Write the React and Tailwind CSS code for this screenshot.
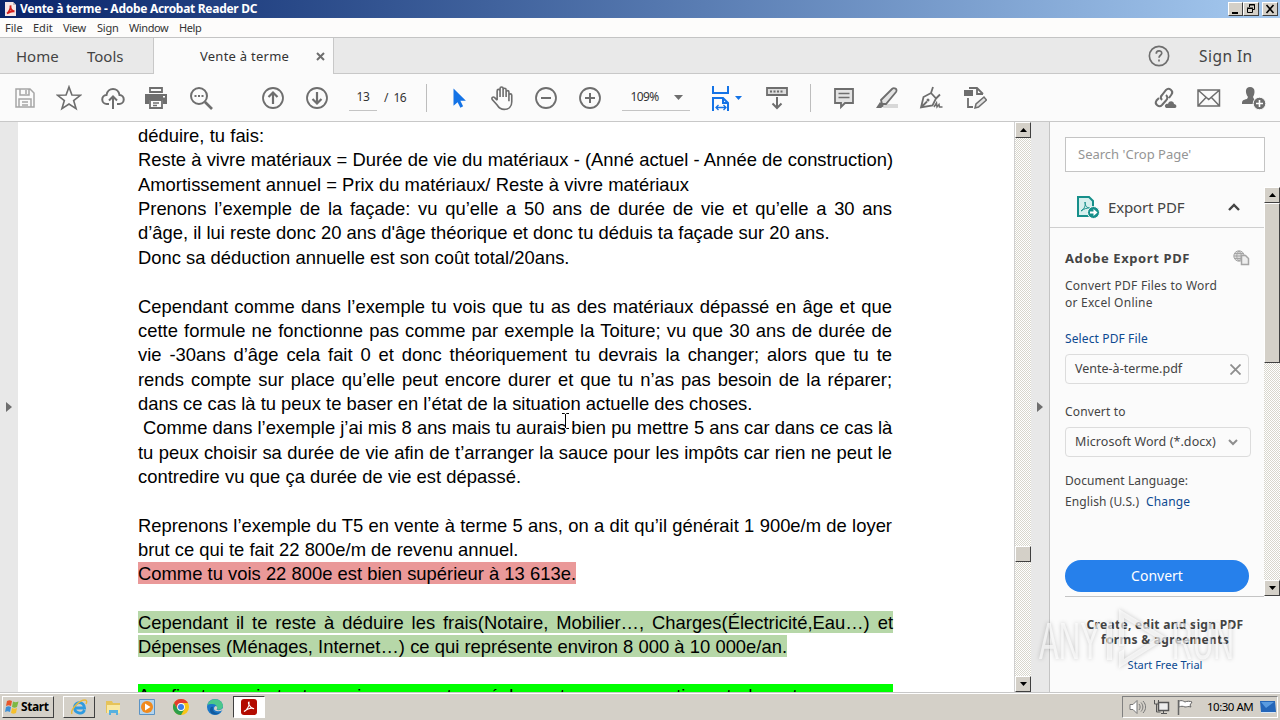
import { clsx } from 'clsx'

const lines = [
  { w: 'w-[126px]', text: 'déduire, tu fais:' },
  { w: 'w-[755px]', text: 'Reste à vivre matériaux = Durée de vie du matériaux - (Anné actuel - Année de construction)' },
  { w: 'w-[551px]', text: 'Amortissement annuel = Prix du matériaux/ Reste à vivre matériaux' },
  { w: 'w-[754px]', text: 'Prenons l’exemple de la façade: vu qu’elle a 50 ans de durée de vie et qu’elle a 30 ans' },
  { w: 'w-[691px]', text: "d’âge, il lui reste donc 20 ans d'âge théorique et donc tu déduis ta façade sur 20 ans." },
  { w: 'w-[431px]', text: 'Donc sa déduction annuelle est son coût total/20ans.' },
  { w: 'w-full', text: '' },
  { w: 'w-[754px]', text: 'Cependant comme dans l’exemple tu vois que tu as des matériaux dépassé en âge et que' },
  { w: 'w-[754px]', text: 'cette formule ne fonctionne pas comme par exemple la Toiture; vu que 30 ans de durée de' },
  { w: 'w-[754px]', text: 'vie -30ans d’âge cela fait 0 et donc théoriquement tu devrais la changer; alors que tu te' },
  { w: 'w-[754px]', text: 'rends compte sur place qu’elle peut encore durer et que tu n’as pas besoin de la réparer;' },
  { w: 'w-[614px]', text: 'dans ce cas là tu peux te baser en l’état de la situation actuelle des choses.' },
  { w: 'w-[754px] pl-[5px]', text: 'Comme dans l’exemple j’ai mis 8 ans mais tu aurais bien pu mettre 5 ans car dans ce cas là' },
  { w: 'w-[754px]', text: 'tu peux choisir sa durée de vie afin de t’arranger la sauce pour les impôts car rien ne peut le' },
  { w: 'w-[383px]', text: 'contredire vu que ça durée de vie est dépassé.' },
  { w: 'w-full', text: '' },
  { w: 'w-[754px]', text: 'Reprenons l’exemple du T5 en vente à terme 5 ans, on a dit qu’il générait 1 900e/m de loyer' },
  { w: 'w-[380px]', text: 'brut ce qui te fait 22 800e/m de revenu annuel.' },
  { w: 'w-[438px]', mark: 'bg-[#ea9999]', text: 'Comme tu vois 22 800e est bien supérieur à 13 613e.' },
  { w: 'w-full', text: '' },
  { w: 'w-[755px]', mark: 'bg-[#b6d7a8]', text: 'Cependant il te reste à déduire les frais(Notaire, Mobilier…, Charges(Électricité,Eau…) et' },
  { w: 'w-[649px]', mark: 'bg-[#b6d7a8]', text: 'Dépenses (Ménages, Internet…) ce qui représente environ 8 000 à 10 000e/an.' },
  { w: 'w-full', text: '' },
  { w: 'w-[755px]', mark: 'bg-[#00ff00]', text: 'Au fin tu avoir tout va vivre avec ton réel car tu es une action et donc tes revenus' },
]

const dither =
  'bg-[repeating-conic-gradient(#d8d6cc_0_25%,#ffffff_0_50%)] bg-[length:2px_2px]'
const raised =
  'border border-t-white border-l-white border-r-[#404040] border-b-[#404040] bg-[#d4d0c8]'

function Svg({ size = 24, className, children }) {
  return (
    <svg
      width={size}
      height={size}
      viewBox="0 0 24 24"
      fill="none"
      stroke="#6e6e6e"
      strokeWidth="1.8"
      className={clsx('block shrink-0', className)}
    >
      {children}
    </svg>
  )
}

function Slot({ w = 'w-11', children }) {
  return <div className={clsx('flex h-full shrink-0 items-center justify-center', w)}>{children}</div>
}

function ScrollButton({ down }) {
  return (
    <div className={clsx('flex h-4 w-full shrink-0 items-center justify-center', raised)}>
      <svg width="7" height="4" viewBox="0 0 7 4" className="block">
        <path d={down ? 'M0 0h7L3.5 4z' : 'M0 4h7L3.5 0z'} fill="#000" />
      </svg>
    </div>
  )
}

function TitleBar() {
  return (
    <div className="flex h-[18px] items-center bg-linear-to-r from-[#0a246a] to-[#a6caf0] pl-1">
      <svg width="13" height="14" viewBox="0 0 13 14" className="block">
        <path d="M1 0h8l3 3v11H1z" fill="#f5e6e6" />
        <path d="M9 0v3h3" fill="#c9b8b8" />
        <path d="M3 11.500c1.500-1 4-4.500 3.500-8-.3 3.500 1.500 5.500 4 6-3-.5-5 .5-7.500 2z" fill="none" stroke="#d4201c" strokeWidth="1.800" />
      </svg>
      <div className="ml-[3px] w-[238px] whitespace-nowrap text-[12px] leading-[18px] font-bold tracking-[-0.290px] text-white">
        Vente à terme - Adobe Acrobat Reader DC
      </div>
      <div className="ml-auto flex pr-[2px]">
        <div className={clsx('h-[14px] w-[15px]', raised)}>
          <svg width="13" height="12" className="block"><path d="M3 9h6v2H3z" /></svg>
        </div>
        <div className={clsx('h-[14px] w-4', raised)}>
          <svg width="14" height="12" className="block" fill="none" stroke="#000">
            <path d="M5.500 4V1.500h5v5H9M5 2h6M3.500 5.500h5v4h-5zM3 5h6" />
          </svg>
        </div>
        <div className={clsx('ml-[3px] h-[14px] w-4', raised)}>
          <svg width="14" height="12" className="block" stroke="#000" strokeWidth="1.600">
            <path d="M3.500 2l7 8M10.500 2l-7 8" />
          </svg>
        </div>
      </div>
    </div>
  )
}

function MenuBar() {
  return (
    <div className="flex h-[19px] items-center gap-3 bg-[#fdfcfb] pl-[5px] text-[11px] leading-[19px] text-[#333]">
      <span className="w-4">File</span>
      <span className="w-[18px]">Edit</span>
      <span className="w-[22px] tracking-[-0.3px]">View</span>
      <span className="w-5 tracking-[-0.2px]">Sign</span>
      <span className="w-[38px] tracking-[-0.4px]">Window</span>
      <span className="tracking-[-0.4px]">Help</span>
    </div>
  )
}

function Tabs() {
  return (
    <div className="flex h-[37px] border-t border-[#c4c4c4] bg-[#e9e9e9] text-[#444]">
      <div className="flex w-[154px] items-center border-r border-b border-[#c8c8c8] pt-[2px] pl-4 text-[15px]">
        <span className="w-[71px]">Home</span>
        <span>Tools</span>
      </div>
      <div className="flex w-[179px] items-center bg-[#fbfbfb] pt-px pl-[46px] text-[13px] text-[#333]">
        <span className="w-[88px] whitespace-nowrap tracking-[0.25px]">Vente à terme</span>
        <svg width="9" height="9" viewBox="0 0 9 9" className="ml-[28px] block" stroke="#6e6e6e" strokeWidth="2">
          <path d="M1 1l7 7M8 1L1 8" />
        </svg>
      </div>
      <div className="flex flex-1 items-center border-b border-l border-[#c8c8c8]">
        <Svg size={22} className="ml-[814px]">
          <circle cx="12" cy="12" r="10.500" />
          <path d="M9 9.500c0-4 6-4 6-.5 0 2.200-3 2.200-3 4.800M12 15.800v2.200" />
        </Svg>
        <span className="ml-[29px] pt-[2px] text-[15.500px] tracking-[0.450px]">Sign In</span>
      </div>
    </div>
  )
}

function Toolbar() {
  return (
    <div className="flex h-12 items-center border-b border-[#c8c8c8] bg-[#fbfbfb] pl-[3px] text-[12px] text-[#333]">
      <Slot>
        <Svg className="opacity-60">
          <path d="M3 3h14l4 4v14H3zM7 3v6h9V3M13 4v4M6 21v-8h12v8M9 16h6M9 19h6" strokeWidth="1.500" />
        </Svg>
      </Slot>
      <Slot>
        <Svg size={26}>
          <path d="M12 1.800l2.700 7.500 7.800.2-6.200 4.900 2.200 7.400L12 17.500l-6.500 4.300 2.200-7.400L1.500 9.500l7.800-.2z" strokeWidth="1.500" />
        </Svg>
      </Slot>
      <Slot>
        <Svg>
          <path d="M8 18H6a4.500 4.500 0 0 1-.5-9C6 5 9 3 12 3s6 2 6.500 6A4.500 4.500 0 0 1 18 18h-2M12 23V11M8 14.500l4-4 4 4" strokeWidth="2" />
        </Svg>
      </Slot>
      <Slot w="w-[42px]">
        <Svg>
          <path d="M6 2h12v4H6z" fill="#fbfbfb" />
          <path d="M1 8h22v10h-4v-4H5v4H1z" fill="#6e6e6e" stroke="none" />
          <path d="M6 14h12v8H6z" fill="#fbfbfb" />
          <path d="M9 17h6M9 19.500h4" strokeWidth="1.400" />
          <path d="M19 10h2v1.500h-2z" fill="#fff" stroke="none" />
        </Svg>
      </Slot>
      <Slot w="w-12">
        <Svg>
          <circle cx="10" cy="10" r="8" strokeWidth="2" />
          <path d="M16 16l7 7" strokeWidth="2.600" />
          <path d="M5.500 10h2M9 10h2M12.500 10h2" />
        </Svg>
      </Slot>
      <div className="ml-[26px] flex h-full">
        <Slot>
          <Svg>
            <circle cx="12" cy="12" r="10" />
            <path d="M12 18V7M7.500 11L12 6.500l4.500 4.500" strokeWidth="2.200" />
          </Svg>
        </Slot>
        <Slot>
          <Svg>
            <circle cx="12" cy="12" r="10" />
            <path d="M12 6v11M7.500 13l4.500 4.500 4.500-4.500" strokeWidth="2.200" />
          </Svg>
        </Slot>
      </div>
      <div className="ml-[10px] flex h-[27px] w-7 items-center justify-center border-b border-[#c4c4c4] tracking-[-0.3px]">13</div>
      <span className="ml-[7px]">/</span>
      <span className="ml-[5px] w-[13px] tracking-[-0.5px]">16</span>
      <div className="ml-5 h-7 w-px bg-[#bdbdbd]" />
      <Slot w="w-[64px]">
        <Svg size={22}>
          <path d="M6 1.500v19l4.500-4 3 6 3-1.500-3-6h6z" fill="#1473e6" stroke="none" />
        </Svg>
      </Slot>
      <Slot w="w-[22px]">
        <Svg size={26}>
          <path
            d="M7.500 14V5.500c0-2 2.700-2 2.700 0V11M10.200 11V3.300c0-2 2.800-2 2.800 0V11M13 4.500c0-2 2.800-2 2.800 0V11M15.800 6.500c0-1.800 2.600-1.800 2.600 0V15c0 0 0 0 0 0M18.400 9.500c0-1.700 2.600-1.700 2.600 0v6c0 4-2.500 7-7 7-3.500 0-5-1.500-6.500-4L3 13.500c-1-2 .8-3 2-2L7.500 14"
            strokeWidth="1.500"
          />
        </Svg>
      </Slot>
      <Slot w="w-[66px]">
        <Svg>
          <circle cx="12" cy="12" r="10" />
          <path d="M7 12h10" strokeWidth="2" />
        </Svg>
      </Slot>
      <Slot w="w-[22px]">
        <Svg>
          <circle cx="12" cy="12" r="10" />
          <path d="M7 12h10M12 7v10" strokeWidth="2" />
        </Svg>
      </Slot>
      <div className="ml-[21px] flex h-[27px] w-[68px] items-center border-b border-[#c4c4c4] pl-2 text-[12px]">
        <span className="w-[32px] tracking-[-0.600px]">109%</span>
        <svg width="9" height="5" className="ml-3 block"><path d="M0 0h9L4.500 5z" fill="#6e6e6e" /></svg>
      </div>
      <div className="ml-[21px] flex items-center gap-1">
        <svg width="20" height="26" viewBox="0 0 20 26" className="block" fill="none" stroke="#1473e6" strokeWidth="2">
          <path d="M2 1v7h15V1M2 26V13h10l5 5v8M12 13v5h5" />
          <path d="M5 22.500h10M7.500 20L5 22.500 7.500 25M12.500 20l2.500 2.500-2.500 2.500" strokeWidth="1.300" />
        </svg>
        <svg width="7" height="4" className="block"><path d="M0 0h7L3.500 4z" fill="#1473e6" /></svg>
      </div>
      <Slot w="w-[70px]">
        <Svg>
          <path d="M2 2h20v7H2z" fill="#ddd" />
          <path d="M5 5.500h14" strokeDasharray="2 1.500" />
          <path d="M12 11v11M7.500 17.500L12 22l4.500-4.500" strokeWidth="2" />
        </Svg>
      </Slot>
      <div className="-ml-[2px] h-7 w-px bg-[#bdbdbd]" />
      <Slot w="w-[65px]">
        <Svg>
          <path d="M3 3h18v14h-8l-4 4v-4H3z" fill="#e4e4e4" />
          <path d="M6.500 7.500h11M6.500 11.500h11" strokeWidth="1.500" />
        </Svg>
      </Slot>
      <Slot w="w-[22px]">
        <Svg>
          <path d="M10 18h13v4H8z" fill="#d8d8d8" stroke="none" />
          <path d="M6 14L17 3c2-2 6 0 4 3L11 18H7z" fill="#e4e4e4" />
          <path d="M1 22l4-6 4 4-3 2z" fill="#6e6e6e" stroke="none" />
        </Svg>
      </Slot>
      <Slot w="w-[66px]">
        <Svg>
          <path d="M2 21.500L4.500 11l7.500-4 5 5.500-3.500 7zM2 21.500l6-6M14 1l-2 6M17 12.500l4-4" />
          <circle cx="9" cy="14" r="1.500" fill="#6e6e6e" stroke="none" />
          <path d="M15 21l2.500-4 .5 4 2-2.500.5 2.500h3" strokeWidth="1.500" />
        </Svg>
      </Slot>
      <Slot w="w-[22px]">
        <Svg>
          <path d="M6 2h8l6 6M14 2v6h6M5 12v9h5" />
          <path d="M1 4h9v6H1z" fill="#6e6e6e" stroke="none" />
          <path d="M12 22l1-4 8-7 2.500 3-8 7z" fill="#e4e4e4" strokeWidth="1.500" />
        </Svg>
      </Slot>
      <div className="ml-auto flex h-full">
        <Slot>
          <Svg>
            <path d="M9 14c-2-2-1-4 0-5l4-5c3-3 8 1 5.500 4.500L16 12M13 9c2 2 1.500 4 0 5.500L9 19c-3 3-8-1-5.500-4.500L6 12" strokeWidth="2" />
            <path d="M13 22c-3-3 1-5 2-4 1-4 6-3 6 0 3 0 3 4 1 4z" fill="#6e6e6e" stroke="none" />
          </Svg>
        </Slot>
        <Slot>
          <Svg>
            <path d="M1 4h21.500v16H1zM1 4l10.700 9.500L22.500 4M1 20l8-8.500M22.500 20l-8-8.500" strokeWidth="1.500" />
          </Svg>
        </Slot>
        <Slot w="w-[49px]">
          <Svg className="-ml-[4px]">
            <path d="M8 1c6 0 5 7 3 10l1 2 2 2-1 3H0c0-4 1-4 5-5l1-2C3 7 3 1 8 1z" fill="#6e6e6e" stroke="none" />
            <circle cx="17.500" cy="17.500" r="6.300" fill="#6e6e6e" stroke="#fbfbfb" strokeWidth="1" />
            <path d="M14 17.500h7M17.500 14v7" stroke="#fff" strokeWidth="1.600" />
          </Svg>
        </Slot>
      </div>
    </div>
  )
}

function DocumentPage() {
  return (
    <div className="flex-1 overflow-hidden bg-white pt-[2.100px] pl-[120px] font-['Liberation_Sans',Arial,sans-serif] text-[18.400px] text-black">
      {lines.map((line, i) => (
        <div key={i} className="h-[24.350px]">
          <div
            className={clsx(
              'h-[22px] pt-px leading-[22px] whitespace-nowrap [text-align-last:justify]',
              line.w,
              line.mark
            )}
          >
            {line.text}
          </div>
        </div>
      ))}
    </div>
  )
}

function DocScrollbar() {
  return (
    <div className={clsx('flex w-[17px] flex-col border-l border-[#d0d0d0]', dither)}>
      <ScrollButton />
      <div className="h-[408px]" />
      <div className={clsx('h-4 w-full', raised)} />
      <div className="mt-auto">
        <ScrollButton down />
      </div>
    </div>
  )
}

function ExportPanel() {
  return (
    <div className="flex w-[230px] flex-col bg-[#fbfbfb] text-[12px] text-[#444]">
      <div className="mt-[15px] ml-[15px] flex h-[35px] w-[200px] shrink-0 items-center border border-[#c4c4c4] bg-white pt-px pl-3 text-[13px] text-[#959595]">
        Search 'Crop Page'
      </div>
      <div className="mt-[15px] flex h-[409px]">
        <div className="flex w-[214px] flex-col">
          <div className="flex h-[41px] shrink-0 items-center border-b border-[#cfcfcf] pl-[26px]">
            <svg width="24" height="24" viewBox="0 0 24 24" className="block" fill="none">
              <path d="M2 2h11l4 4v15H2z" fill="#d5efed" stroke="#168f8a" strokeWidth="2" />
              <path d="M5 16c3-2 5-5 4-9 0 4 2 6 5 6-3 0-6 .5-9 3z" stroke="#168f8a" />
              <circle cx="17.500" cy="17.500" r="6" fill="#168f8a" stroke="#fbfbfb" />
              <path d="M14 16.500h3.500V14l4 3.500-4 3.500v-2.500H14z" fill="#fff" />
            </svg>
            <span className="ml-[8px] w-[77px] whitespace-nowrap text-[15px] tracking-[-0.150px]">Export PDF</span>
            <svg width="12" height="8" viewBox="0 0 12 8" className="ml-[43px] block" fill="none" stroke="#444" strokeWidth="2.400">
              <path d="M1 7l5-5 5 5" />
            </svg>
          </div>
          <div className="flex flex-col pl-[15px]">
            <div className="mt-[19px] flex h-[22px] items-center">
              <span className="w-[168px] pt-px text-[13px] font-bold tracking-[0.600px]">Adobe Export PDF</span>
              <svg width="17" height="16" viewBox="0 0 17 16" className="block" fill="none" stroke="#a5a5a5">
                <circle cx="6" cy="6" r="5.200" fill="#ddd" />
                <path d="M1 6h10M6 1c-3 3-3 7 0 10M6 1c3 3 3 7 0 10M2 3.500h8M2 8.500h7" />
                <path d="M8.500 5.500h4l3 3v6h-7z" fill="#eee" strokeWidth="1.500" />
              </svg>
            </div>
            <div className="mt-2 leading-[17px] tracking-[0.250px]">
              Convert PDF Files to Word
              <br />
              or Excel Online
            </div>
            <div className="mt-[19px] leading-[17px] tracking-[0.120px] text-[#0d4a91]">Select PDF File</div>
            <div className="mt-[7px] flex h-[30px] w-[184px] items-center rounded-sm border border-[#dcdcdc] pt-px pl-[9px] text-[12.500px]">
              <span className="w-[155px]">Vente-à-terme.pdf</span>
              <svg width="11" height="11" viewBox="0 0 11 11" className="block" stroke="#8e8e8e" strokeWidth="1.800">
                <path d="M.5.5l10 10M10.500.5l-10 10" />
              </svg>
            </div>
            <div className="mt-[19px] leading-[17px] tracking-[0.150px]">Convert to</div>
            <div className="mt-[7px] flex h-[30px] w-[186px] items-center rounded-sm border border-[#dcdcdc] pt-px pl-[9px] text-[12.500px]">
              <span className="w-[153px] whitespace-nowrap tracking-[0.080px]">Microsoft Word (*.docx)</span>
              <svg width="10" height="7" viewBox="0 0 10 7" className="block" fill="none" stroke="#8e8e8e" strokeWidth="2">
                <path d="M1 1l4 4 4-4" />
              </svg>
            </div>
            <div className="mt-[15px] leading-[17px] tracking-[0.100px]">Document Language:</div>
            <div className="mt-1 leading-[17px] tracking-[0.100px]">
              <span className="mr-[7px]">English (U.S.)</span>
              <span className="text-[#0d4a91]">Change</span>
            </div>
            <button className="mt-[50px] h-8 w-[184px] rounded-full bg-[#2680eb] text-[14px] leading-8 text-white">
              Convert
            </button>
            <div className="mt-1 h-px w-[199px] bg-[#c4c4c4]" />
          </div>
        </div>
        <div className={clsx('flex w-4 flex-col', dither)}>
          <ScrollButton />
          <div className={clsx('h-[160px] w-full', raised)} />
          <div className="mt-auto">
            <ScrollButton down />
          </div>
        </div>
      </div>
      <div className="mt-[21px] w-[230px] text-center text-[12px] leading-[15px] font-bold tracking-[0.3px]">
        Create, edit and sign PDF
        <br />
        forms &amp; agreements
      </div>
      <div className="mt-[9px] text-center text-[11px] leading-[17px] text-[#0d4a91]">Start Free Trial</div>
    </div>
  )
}

function Taskbar() {
  return (
    <div className="flex h-[27px] items-center border-t border-white bg-[#d4d0c8] pl-[2px] text-black">
      <div className={clsx('flex h-[22px] w-[52px] items-center pl-px', raised)}>
        <svg width="16" height="16" viewBox="0 0 16 16" className="block">
          <path d="M3 2c2-1 3-1 5 0L7 7C5 6 4 6 2 7z" fill="#e8562b" />
          <path d="M9 2.500c2 1 3 1 5.500 0L13 8c-2 1-3 1-5 0z" fill="#7db843" />
          <path d="M2 8c2-1 3-1 5 0l-1 5c-2-1-3-1-5 0z" fill="#3d8fd6" />
          <path d="M8 9c2 1 3 1 5 0l-1 5c-2 1-3 1-5 0z" fill="#f6c02c" />
        </svg>
        <span className="ml-px text-[12px] font-bold tracking-[-0.4px]">Start</span>
      </div>
      <div className={clsx('ml-[9px] flex h-[22px] w-8 items-center justify-center', raised)}>
        <svg width="18" height="18" viewBox="0 0 18 18" className="block" fill="none">
          <path d="M14.500 12c-2 5-10 3.500-10-2.500s9-7 10 .5h-10" stroke="#2f9be0" strokeWidth="2.800" />
          <path d="M2 16C0 12 9 2 15 2c2 0 2 2 1 4" stroke="#e9b93a" strokeWidth="1.400" />
        </svg>
      </div>
      <Slot w="w-9">
        <svg width="17" height="17" viewBox="0 0 17 17" className="block">
          <path d="M1 2h6l1 2h7v10H1z" fill="#e6c35a" />
          <path d="M2 6h13v8H2z" fill="#f9e8a2" />
          <path d="M4 11h9v5h-2v-2H6v2H4z" fill="#57b1df" />
        </svg>
      </Slot>
      <Slot w="w-8">
        <svg width="16" height="16" viewBox="0 0 16 16" className="block">
          <path d="M.5.5h15v15H.5z" fill="#b4d4ee" stroke="#5b93c4" />
          <circle cx="8" cy="8" r="6" fill="#f08a1d" />
          <path d="M6 4.500v7L11.500 8z" fill="#fff" />
        </svg>
      </Slot>
      <Slot w="w-9">
        <svg width="16" height="16" viewBox="0 0 16 16" className="block">
          <circle cx="8" cy="8" r="8" fill="#f9c518" />
          <path d="M1.070 4A8 8 0 0 1 14.930 4H8L4.500 10z" fill="#e33b2e" />
          <path d="M1.070 4A8 8 0 0 0 8 16l3.500-6H4.500z" fill="#2d9f4b" />
          <circle cx="8" cy="8" r="3.900" fill="#fff" />
          <circle cx="8" cy="8" r="3" fill="#3b7de8" />
        </svg>
      </Slot>
      <Slot w="w-8">
        <svg width="16" height="16" viewBox="0 0 16 16" className="block">
          <circle cx="8" cy="8" r="8" fill="#1b78c8" />
          <path d="M.5 6C2-1.500 15-2 16 7c0 3-3 4.500-6 3.500C11 8 9 5 5.500 5 3 5 1 5.500.5 6z" fill="#4bc78b" />
          <path d="M6 8c-1 4 2 7 7 5.500C10 17 3 16 3 11c0-3 2-4 3-3z" fill="#125a9e" />
          <path d="M9 7c2 1 1 3 .5 3.500 2 1.500 5 .5 6.500-1.500v2c-4 2-9 1.500-9-1.500 0-1.500 1-2.500 2-2.500z" fill="#d4d0c8" />
        </svg>
      </Slot>
      <div className="ml-[2px] flex h-[22px] w-8 items-center justify-center border border-t-[#404040] border-r-white border-b-white border-l-[#404040] bg-white">
        <svg width="16" height="16" viewBox="0 0 16 16" className="block">
          <rect width="16" height="16" rx="3" fill="#b30b00" />
          <path d="M3 12.500c2.500-.8 6-6 5-9.500-1.500 0 0 5.500 5 6.800-2-1.300-6-.3-10 2.700z" fill="none" stroke="#fff" strokeWidth="1.100" />
        </svg>
      </div>
      <div className="mr-[2px] ml-auto flex h-[22px] w-[156px] items-center border border-t-[#808080] border-r-white border-b-white border-l-[#808080] pl-[6px]">
        <svg width="17" height="16" viewBox="0 0 17 16" className="block" fill="none" stroke="#777">
          <path d="M1 5.500h3l4-4v13l-4-4H1z" fill="#fff" />
          <path d="M10 5c1.500 2 1.500 4 0 6M12 3.500c2.500 3 2.500 6 0 9M14 2c3.500 4 3.500 8 0 12" />
        </svg>
        <svg width="17" height="16" viewBox="0 0 17 16" className="ml-[7px] block" fill="none" stroke="#555">
          <path d="M5.500 3.500h10v8h-10z" fill="#eee" strokeWidth="1.500" />
          <path d="M1.500 1v4h4V1M3.500 5v8h4M8 14.500h6M10.500 12v2" />
        </svg>
        <svg width="16" height="16" viewBox="0 0 16 16" className="ml-[7px] block" stroke="#666">
          <path d="M1.500 1v15" strokeWidth="1.500" />
          <path d="M2 2c3-1 4 0 6 1 2-1 5-1 7 0l-2 3 1 2c-3-1-4 0-6 0-2-1-4-1-6 0z" fill="#fff" />
        </svg>
        <span className="ml-[14px] w-[46px] whitespace-nowrap text-[11.500px] tracking-[-0.5px]">10:30 AM</span>
        <svg width="16" height="14" viewBox="0 0 16 14" className="ml-[7px] block">
          <path d="M0 1h15l1 11H1z" fill="#2466b9" />
          <path d="M1 2h13l-8 6z" fill="#5a9be0" />
          <path d="M1 12h14v1H1z" fill="#d8e6f4" />
        </svg>
      </div>
    </div>
  )
}

function Watermark() {
  return (
    <svg
      width="204"
      height="66"
      viewBox="0 0 204 66"
      className="absolute top-[606px] left-[1036px] drop-shadow-[0_0_2px_rgba(0,0,0,0.300)]"
      fill="#fff"
      fillOpacity="0.650"
      fontFamily="Liberation Sans, Arial, sans-serif"
      fontSize="52"
    >
      <text x="3" y="53" textLength="61" lengthAdjust="spacingAndGlyphs">ANY</text>
      <text x="136" y="53" textLength="62" lengthAdjust="spacingAndGlyphs">RUN</text>
      <path d="M71 16h5v38h-5z" />
      <path d="M83 3l48 29-48 30V46l5-3v10l33-21-33-20v28h-5z" fillRule="evenodd" />
    </svg>
  )
}

export default function App() {
  return (
    <div className="relative flex h-[720px] w-[1280px] flex-col overflow-hidden bg-white font-['Noto_Sans','Open_Sans',sans-serif]">
      <TitleBar />
      <MenuBar />
      <Tabs />
      <Toolbar />
      <div className="flex h-[571px] border-b border-[#c8c8c8]">
        <div className="flex w-[18px] items-center bg-[#e8e8e8] pl-[6px]">
          <svg width="6" height="10" className="block"><path d="M0 0v10l6-5z" fill="#6e6e6e" /></svg>
        </div>
        <DocumentPage />
        <DocScrollbar />
        <div className="flex w-[19px] items-center border-r border-[#c4c4c4] bg-[#e8e8e8] pl-[6px]">
          <svg width="6" height="10" className="block"><path d="M0 0v10l6-5z" fill="#6e6e6e" /></svg>
        </div>
        <ExportPanel />
      </div>
      <Taskbar />
      <Watermark />
      {/* text cursor */}
      <svg width="7" height="16" viewBox="0 0 7 16" className="absolute top-[413px] left-[562px]" fill="none" stroke="#000">
        <path d="M0 .5h2.500l1 1 1-1H7M3.500 1v14M0 15.500h2.500l1-1 1 1H7" />
      </svg>
    </div>
  )
}
